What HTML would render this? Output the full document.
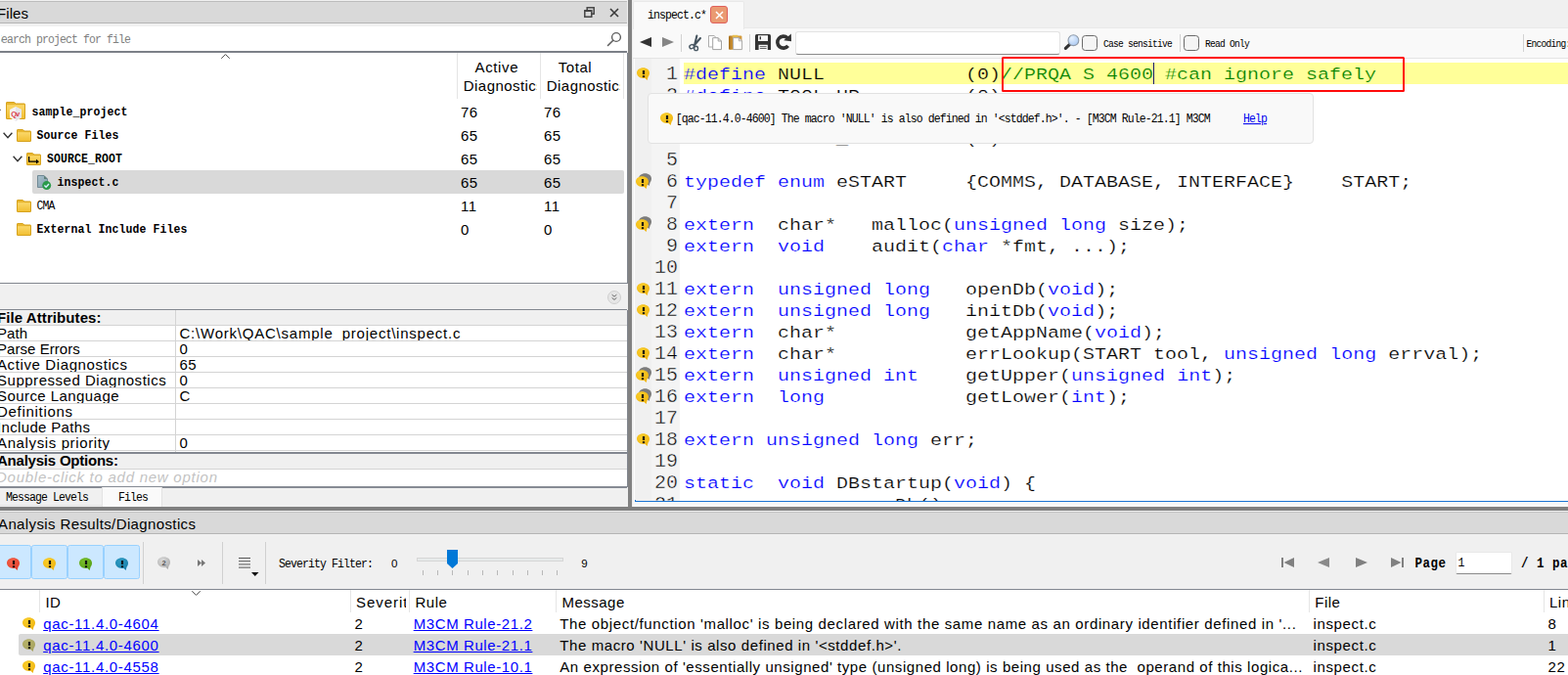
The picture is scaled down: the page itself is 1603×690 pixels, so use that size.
<!DOCTYPE html>
<html lang="en"><head><meta charset="utf-8"><title>inspect.c - Analysis</title>
<style>

html,body{margin:0;padding:0;background:#fff;}
#app{position:relative;width:1603px;height:690px;overflow:hidden;background:#f0f0f0;font-family:"Liberation Sans",sans-serif;}
.r{position:absolute;}
.t{position:absolute;white-space:pre;}
.c{position:absolute;overflow:hidden;}
svg{position:absolute;overflow:visible;}
.cl{font:20px/22px "Liberation Mono",monospace;color:#000;transform:scaleY(0.87);transform-origin:0 16px;-webkit-text-stroke:0.25px #fff;}.cl.g{-webkit-text-stroke:0.45px #f4f4f4;transform:scaleY(0.97)}.cl.y{-webkit-text-stroke-color:#ffff99}

</style></head>
<body>
<div id="app">
<div class="c" id="files" style="left:0;top:0;width:642px;height:518px;background:#f0f0f0">
<div class="r" style="left:0px;top:0px;width:641px;height:1px;background:#f0f0f0;"></div>
<div class="r" style="left:0px;top:1px;width:641px;height:22px;background:#d9d9d9;border-top:1px solid #bdbdbd;border-bottom:1px solid #b4b4b4;box-sizing:content-box;height:21px"></div>
<span class="t" style="left:-3.00px;top:4px;font:normal normal 15px/19px 'Liberation Sans',sans-serif;color:#000;letter-spacing:0.082px;">Files</span>
<svg style="left:597px;top:7px" width="11" height="11" viewBox="0 0 11 11"><rect x="3.2" y="0.8" width="7" height="6.4" fill="none" stroke="#444" stroke-width="1.5"/><rect x="0.8" y="3.8" width="7" height="6.4" fill="#d9d9d9" stroke="#444" stroke-width="1.5"/><rect x="0.8" y="3.6" width="7" height="1.4" fill="#444"/></svg>
<svg style="left:623.3px;top:7.8px" width="10" height="10" viewBox="0 0 10 10"><path d="M1 1 L9 9 M9 1 L1 9" stroke="#3a3a3a" stroke-width="1.6" fill="none"/></svg>
<div class="r" style="left:0px;top:27px;width:642px;height:25px;background:#fff;"></div>
<div class="r" style="left:0px;top:52px;width:641px;height:2px;background:#7c8088;"></div>
<span class="t" style="left:-4.90px;top:34px;font:normal normal 11.5px/14px 'Liberation Mono',monospace;color:#808080;letter-spacing:-0.901px;transform:scaleY(1.08);transform-origin:0 10px;">Search project for file</span>
<svg style="left:620px;top:31.5px" width="16" height="16" viewBox="0 0 16 16"><circle cx="10" cy="6" r="4.4" fill="none" stroke="#5f5f5f" stroke-width="1.4"/><path d="M6.8 9.2 L1.5 14.5" stroke="#5f5f5f" stroke-width="1.6" stroke-linecap="round"/></svg>
<div class="r" style="left:0px;top:30px;width:1.2px;height:20px;background:#fff;"></div>
<div class="r" style="left:0px;top:54px;width:641px;height:235px;background:#fff;"></div>
<div class="r" style="left:0px;top:289px;width:641px;height:1px;background:#828790;"></div>
<div class="r" style="left:467px;top:54px;width:1px;height:47px;background:#e5e5e5;"></div>
<div class="r" style="left:552px;top:54px;width:1px;height:47px;background:#e5e5e5;"></div>
<div class="r" style="left:637px;top:54px;width:1px;height:47px;background:#e5e5e5;"></div>
<svg style="left:226px;top:55px" width="9" height="5" viewBox="0 0 9 5"><path d="M0.3 4.8 L4.5 0.6 L8.7 4.8" stroke="#4a4a4a" stroke-width="1" fill="none"/></svg>
<span class="t" style="left:485.50px;top:59px;font:normal normal 15px/19px 'Liberation Sans',sans-serif;color:#000;letter-spacing:0.628px;">Active</span>
<div class="c" style="left:468px;top:78px;width:81px;height:22px"><span class="t" style="left:5.80px;top:0px;font:normal normal 15px/19px 'Liberation Sans',sans-serif;color:#000;letter-spacing:0.445px;">Diagnostics</span></div>
<span class="t" style="left:570.80px;top:59px;font:normal normal 15px/19px 'Liberation Sans',sans-serif;color:#000;letter-spacing:0.528px;">Total</span>
<div class="c" style="left:553px;top:78px;width:81px;height:22px"><span class="t" style="left:5.80px;top:0px;font:normal normal 15px/19px 'Liberation Sans',sans-serif;color:#000;letter-spacing:0.445px;">Diagnostics</span></div>
<div class="r" style="left:33px;top:174px;width:605px;height:24px;background:#d9d9d9;border-radius:2px"></div>
<svg style="left:-9px;top:111px" width="10" height="7" viewBox="0 0 10 7"><path d="M0.6 0.8 L5 5.6 L9.4 0.8" stroke="#333" stroke-width="1.4" fill="none"/></svg>
<svg style="left:6px;top:104px" width="20" height="20" viewBox="0 0 20 20"><defs><linearGradient id="g1" x1="0" y1="0" x2="0" y2="1"><stop offset="0" stop-color="#fbd86a"/><stop offset="1" stop-color="#f1bf33"/></linearGradient></defs><path d="M0.5 1 Q0.5 0.5 1 0.5 L8.40 0.5 L10.40 2 L19 2 Q19.5 2 19.5 2.5 L19.5 17 Q19.5 17.5 19 17.5 L1 17.5 Q0.5 17.5 0.5 17 Z" fill="#e9b730" stroke="#d6a21d" stroke-width="1"/><rect x="1" y="3.2" width="18" height="13.8" fill="url(#g1)"/><path d="M10 5 L16 8 L16 16 L10 20 L4 16 L4 8 Z" fill="#f4f4f6"/><path d="M10 5 L16 8 L16 16 L10 20 Z" fill="#e6e6ea"/><text x="5.2" y="15" font-family="Liberation Sans, sans-serif" font-size="7.5" font-weight="bold" fill="#d8404c" letter-spacing="-0.9">Qv</text></svg>
<span class="t" style="left:32.50px;top:108px;font:normal bold 11.5px/14px 'Liberation Mono',monospace;color:#000;letter-spacing:0.099px;transform:scaleY(1.08);transform-origin:0 10px;">sample_project</span>
<span class="t" style="left:471.00px;top:105px;font:normal normal 15px/19px 'Liberation Sans',sans-serif;color:#000;letter-spacing:0.500px;">76</span>
<span class="t" style="left:556.00px;top:105px;font:normal normal 15px/19px 'Liberation Sans',sans-serif;color:#000;letter-spacing:0.500px;">76</span>
<svg style="left:3px;top:135px" width="10" height="7" viewBox="0 0 10 7"><path d="M0.6 0.8 L5 5.6 L9.4 0.8" stroke="#333" stroke-width="1.4" fill="none"/></svg>
<svg style="left:17px;top:132px" width="15" height="13" viewBox="0 0 15 13"><defs><linearGradient id="g2" x1="0" y1="0" x2="0" y2="1"><stop offset="0" stop-color="#fbd86a"/><stop offset="1" stop-color="#f1bf33"/></linearGradient></defs><path d="M0.5 1 Q0.5 0.5 1 0.5 L6.30 0.5 L7.80 2 L14 2 Q14.5 2 14.5 2.5 L14.5 12 Q14.5 12.5 14 12.5 L1 12.5 Q0.5 12.5 0.5 12 Z" fill="#e9b730" stroke="#d6a21d" stroke-width="1"/><rect x="1" y="3.2" width="13" height="8.8" fill="url(#g2)"/></svg>
<span class="t" style="left:37.50px;top:132px;font:normal bold 11.5px/14px 'Liberation Mono',monospace;color:#000;letter-spacing:0.099px;transform:scaleY(1.08);transform-origin:0 10px;">Source Files</span>
<span class="t" style="left:471.00px;top:129px;font:normal normal 15px/19px 'Liberation Sans',sans-serif;color:#000;letter-spacing:0.500px;">65</span>
<span class="t" style="left:556.00px;top:129px;font:normal normal 15px/19px 'Liberation Sans',sans-serif;color:#000;letter-spacing:0.500px;">65</span>
<svg style="left:13px;top:159px" width="10" height="7" viewBox="0 0 10 7"><path d="M0.6 0.8 L5 5.6 L9.4 0.8" stroke="#333" stroke-width="1.4" fill="none"/></svg>
<svg style="left:27px;top:156px" width="15" height="13" viewBox="0 0 15 13"><defs><linearGradient id="g3" x1="0" y1="0" x2="0" y2="1"><stop offset="0" stop-color="#fbd86a"/><stop offset="1" stop-color="#f1bf33"/></linearGradient></defs><path d="M0.5 1 Q0.5 0.5 1 0.5 L6.30 0.5 L7.80 2 L14 2 Q14.5 2 14.5 2.5 L14.5 12 Q14.5 12.5 14 12.5 L1 12.5 Q0.5 12.5 0.5 12 Z" fill="#e9b730" stroke="#d6a21d" stroke-width="1"/><rect x="1" y="3.2" width="13" height="8.8" fill="url(#g3)"/><path d="M2.6 4 L2.6 9.2 L11 9.2" stroke="#000" stroke-width="1.3" fill="none"/><path d="M10 6.8 L13 9.2 L10 11.6 Z" fill="#000"/></svg>
<span class="t" style="left:48.00px;top:156px;font:normal bold 11.5px/14px 'Liberation Mono',monospace;color:#000;letter-spacing:0.099px;transform:scaleY(1.08);transform-origin:0 10px;">SOURCE_ROOT</span>
<span class="t" style="left:471.00px;top:153px;font:normal normal 15px/19px 'Liberation Sans',sans-serif;color:#000;letter-spacing:0.500px;">65</span>
<span class="t" style="left:556.00px;top:153px;font:normal normal 15px/19px 'Liberation Sans',sans-serif;color:#000;letter-spacing:0.500px;">65</span>
<svg style="left:38px;top:179px" width="15" height="16" viewBox="0 0 15 16"><defs><linearGradient id="g4" x1="0" y1="0" x2="1" y2="1"><stop offset="0" stop-color="#a9c0cc"/><stop offset="1" stop-color="#7f9dab"/></linearGradient></defs><path d="M0.5 0.5 L7 0.5 L10.5 4 L10.5 12.5 L0.5 12.5 Z" fill="url(#g4)" stroke="#6f8894" stroke-width="1"/><path d="M7 0.5 L7 4 L10.5 4 Z" fill="#5f7f78"/><circle cx="9.7" cy="10.6" r="4.5" fill="#2a9a4a"/><path d="M7.4 10.6 L9.1 12.3 L12 9" stroke="#d8f0ff" stroke-width="1.4" fill="none"/></svg>
<span class="t" style="left:58.50px;top:180px;font:normal bold 11.5px/14px 'Liberation Mono',monospace;color:#000;letter-spacing:0.099px;transform:scaleY(1.08);transform-origin:0 10px;">inspect.c</span>
<span class="t" style="left:471.00px;top:177px;font:normal normal 15px/19px 'Liberation Sans',sans-serif;color:#000;letter-spacing:0.500px;">65</span>
<span class="t" style="left:556.00px;top:177px;font:normal normal 15px/19px 'Liberation Sans',sans-serif;color:#000;letter-spacing:0.500px;">65</span>
<svg style="left:17px;top:204px" width="15" height="13" viewBox="0 0 15 13"><defs><linearGradient id="g5" x1="0" y1="0" x2="0" y2="1"><stop offset="0" stop-color="#fbd86a"/><stop offset="1" stop-color="#f1bf33"/></linearGradient></defs><path d="M0.5 1 Q0.5 0.5 1 0.5 L6.30 0.5 L7.80 2 L14 2 Q14.5 2 14.5 2.5 L14.5 12 Q14.5 12.5 14 12.5 L1 12.5 Q0.5 12.5 0.5 12 Z" fill="#e9b730" stroke="#d6a21d" stroke-width="1"/><rect x="1" y="3.2" width="13" height="8.8" fill="url(#g5)"/></svg>
<span class="t" style="left:37.50px;top:204px;font:normal normal 11.5px/14px 'Liberation Mono',monospace;color:#000;letter-spacing:-0.901px;transform:scaleY(1.08);transform-origin:0 10px;">CMA</span>
<span class="t" style="left:471.00px;top:201px;font:normal normal 15px/19px 'Liberation Sans',sans-serif;color:#000;letter-spacing:0.500px;">11</span>
<span class="t" style="left:556.00px;top:201px;font:normal normal 15px/19px 'Liberation Sans',sans-serif;color:#000;letter-spacing:0.500px;">11</span>
<svg style="left:17px;top:228px" width="15" height="13" viewBox="0 0 15 13"><defs><linearGradient id="g6" x1="0" y1="0" x2="0" y2="1"><stop offset="0" stop-color="#fbd86a"/><stop offset="1" stop-color="#f1bf33"/></linearGradient></defs><path d="M0.5 1 Q0.5 0.5 1 0.5 L6.30 0.5 L7.80 2 L14 2 Q14.5 2 14.5 2.5 L14.5 12 Q14.5 12.5 14 12.5 L1 12.5 Q0.5 12.5 0.5 12 Z" fill="#e9b730" stroke="#d6a21d" stroke-width="1"/><rect x="1" y="3.2" width="13" height="8.8" fill="url(#g6)"/></svg>
<span class="t" style="left:37.50px;top:228px;font:normal bold 11.5px/14px 'Liberation Mono',monospace;color:#000;letter-spacing:0.099px;transform:scaleY(1.08);transform-origin:0 10px;">External Include Files</span>
<span class="t" style="left:471.00px;top:225px;font:normal normal 15px/19px 'Liberation Sans',sans-serif;color:#000;letter-spacing:0.500px;">0</span>
<span class="t" style="left:556.00px;top:225px;font:normal normal 15px/19px 'Liberation Sans',sans-serif;color:#000;letter-spacing:0.500px;">0</span>
<svg style="left:621px;top:297px" width="14" height="14" viewBox="0 0 14 14"><circle cx="7" cy="7" r="6.5" fill="#e6e6e6" stroke="#cfcfcf" stroke-width="1"/><path d="M4.6 4.2 L7 6.2 L9.4 4.2 M4.6 7.4 L7 9.4 L9.4 7.4" stroke="#666" stroke-width="1" fill="none"/></svg>
<div class="r" style="left:0px;top:316px;width:641px;height:1px;background:#828790;"></div>
<div class="r" style="left:0px;top:317px;width:641px;height:146px;background:#fff;"></div>
<div class="r" style="left:0px;top:317px;width:641px;height:15px;background:#f0f0f0;"></div>
<div class="r" style="left:0px;top:332px;width:641px;height:1px;background:#d4d4d4;"></div>
<div class="r" style="left:0px;top:348px;width:641px;height:1px;background:#d4d4d4;"></div>
<div class="r" style="left:0px;top:364px;width:641px;height:1px;background:#d4d4d4;"></div>
<div class="r" style="left:0px;top:380px;width:641px;height:1px;background:#d4d4d4;"></div>
<div class="r" style="left:0px;top:396px;width:641px;height:1px;background:#d4d4d4;"></div>
<div class="r" style="left:0px;top:412px;width:641px;height:1px;background:#d4d4d4;"></div>
<div class="r" style="left:0px;top:428px;width:641px;height:1px;background:#d4d4d4;"></div>
<div class="r" style="left:0px;top:444px;width:641px;height:1px;background:#d4d4d4;"></div>
<div class="r" style="left:0px;top:460px;width:641px;height:1px;background:#d4d4d4;"></div>
<div class="r" style="left:179px;top:317px;width:1px;height:146px;background:#d4d4d4;"></div>
<div class="r" style="left:0px;top:462px;width:641px;height:2px;background:#828790;"></div>
<div class="c" style="left:0;top:317px;width:641px;height:15px"><span class="t" style="left:-3.00px;top:-2px;font:normal bold 15px/19px 'Liberation Sans',sans-serif;color:#000;letter-spacing:0.081px;">File Attributes:</span></div>
<div class="c" style="left:0;top:333px;width:180px;height:15px"><span class="t" style="left:-3.00px;top:-2px;font:normal normal 15px/19px 'Liberation Sans',sans-serif;color:#000;letter-spacing:0.047px;">Path</span></div>
<div class="c" style="left:181px;top:333px;width:460px;height:15px"><span class="t" style="left:2.50px;top:-2px;font:normal normal 15px/19px 'Liberation Sans',sans-serif;color:#000;letter-spacing:0.777px;">C:\Work\QAC\sample_project\inspect.c</span></div>
<div class="c" style="left:0;top:349px;width:180px;height:15px"><span class="t" style="left:-3.00px;top:-2px;font:normal normal 15px/19px 'Liberation Sans',sans-serif;color:#000;letter-spacing:0.047px;">Parse Errors</span></div>
<div class="c" style="left:181px;top:349px;width:460px;height:15px"><span class="t" style="left:2.50px;top:-2px;font:normal normal 15px/19px 'Liberation Sans',sans-serif;color:#000;letter-spacing:0.500px;">0</span></div>
<div class="c" style="left:0;top:365px;width:180px;height:15px"><span class="t" style="left:-3.00px;top:-2px;font:normal normal 15px/19px 'Liberation Sans',sans-serif;color:#000;letter-spacing:0.614px;">Active Diagnostics</span></div>
<div class="c" style="left:181px;top:365px;width:460px;height:15px"><span class="t" style="left:2.50px;top:-2px;font:normal normal 15px/19px 'Liberation Sans',sans-serif;color:#000;letter-spacing:0.500px;">65</span></div>
<div class="c" style="left:0;top:381px;width:180px;height:15px"><span class="t" style="left:-3.00px;top:-2px;font:normal normal 15px/19px 'Liberation Sans',sans-serif;color:#000;letter-spacing:0.521px;">Suppressed Diagnostics</span></div>
<div class="c" style="left:181px;top:381px;width:460px;height:15px"><span class="t" style="left:2.50px;top:-2px;font:normal normal 15px/19px 'Liberation Sans',sans-serif;color:#000;letter-spacing:0.500px;">0</span></div>
<div class="c" style="left:0;top:397px;width:180px;height:15px"><span class="t" style="left:-3.00px;top:-2px;font:normal normal 15px/19px 'Liberation Sans',sans-serif;color:#000;letter-spacing:0.433px;">Source Language</span></div>
<div class="c" style="left:181px;top:397px;width:460px;height:15px"><span class="t" style="left:2.50px;top:-2px;font:normal normal 15px/19px 'Liberation Sans',sans-serif;color:#000;letter-spacing:0.500px;">C</span></div>
<div class="c" style="left:0;top:413px;width:180px;height:15px"><span class="t" style="left:-3.00px;top:-2px;font:normal normal 15px/19px 'Liberation Sans',sans-serif;color:#000;letter-spacing:0.695px;">Definitions</span></div>
<div class="c" style="left:0;top:429px;width:180px;height:15px"><span class="t" style="left:-3.00px;top:-2px;font:normal normal 15px/19px 'Liberation Sans',sans-serif;color:#000;letter-spacing:0.341px;">Include Paths</span></div>
<div class="c" style="left:0;top:445px;width:180px;height:15px"><span class="t" style="left:-3.00px;top:-2px;font:normal normal 15px/19px 'Liberation Sans',sans-serif;color:#000;letter-spacing:0.623px;">Analysis priority</span></div>
<div class="c" style="left:181px;top:445px;width:460px;height:15px"><span class="t" style="left:2.50px;top:-2px;font:normal normal 15px/19px 'Liberation Sans',sans-serif;color:#000;letter-spacing:0.500px;">0</span></div>
<div class="r" style="left:0px;top:464px;width:641px;height:15px;background:#f0f0f0;"></div>
<div class="r" style="left:0px;top:479px;width:641px;height:1px;background:#d4d4d4;"></div>
<div class="r" style="left:0px;top:480px;width:641px;height:17px;background:#fff;"></div>
<div class="r" style="left:0px;top:497px;width:641px;height:2px;background:#868b94;"></div>
<div class="c" style="left:0;top:464px;width:641px;height:15px"><span class="t" style="left:-3.00px;top:-3px;font:normal bold 15px/19px 'Liberation Sans',sans-serif;color:#000;letter-spacing:-0.221px;">Analysis Options:</span></div>
<div class="c" style="left:0;top:480px;width:641px;height:17px"><span class="t" style="left:-4.00px;top:-2px;font:italic normal 15px/19px 'Liberation Sans',sans-serif;color:#c3c3c3;letter-spacing:0.748px;">Double-click to add new option</span></div>
<div class="r" style="left:641px;top:54px;width:1px;height:236px;background:#828790;"></div>
<div class="r" style="left:641px;top:317px;width:1px;height:181px;background:#828790;"></div>
<div class="r" style="left:0px;top:499px;width:641px;height:19px;background:#f0f0f0;"></div>
<div class="r" style="left:104px;top:498px;width:62px;height:20px;background:#fafafa;border-left:1px solid #e3e3e3;border-right:1px solid #e3e3e3;box-sizing:border-box"></div>
<div class="r" style="left:0px;top:516px;width:104px;height:1px;background:#e3e3e3;"></div>
<span class="t" style="left:6.00px;top:502px;font:normal normal 11.5px/14px 'Liberation Mono',monospace;color:#000;letter-spacing:-0.901px;transform:scaleY(1.08);transform-origin:0 10px;">Message Levels</span>
<span class="t" style="left:121.00px;top:502px;font:normal normal 11.5px/14px 'Liberation Mono',monospace;color:#000;letter-spacing:-0.901px;transform:scaleY(1.08);transform-origin:0 10px;">Files</span>
</div>
<div class="r" style="left:642px;top:0px;width:4px;height:518px;background:#828282;"></div>
<div class="r" style="left:646px;top:0px;width:1px;height:518px;background:#ededed;"></div>
<div class="r" style="left:0px;top:518px;width:1603px;height:4px;background:#808080;"></div>
<div class="r" style="left:647px;top:0px;width:956px;height:28px;background:#f0f0f0;"></div>
<div class="r" style="left:647px;top:28px;width:956px;height:31px;background:#f9f9f9;border-top:1px solid #e9e9e9;box-sizing:border-box"></div>
<div class="r" style="left:647px;top:59px;width:956px;height:1px;background:#e4e4e4;"></div>
<div class="r" style="left:647px;top:1px;width:114px;height:29px;background:#f9f9f9;border:1px solid #e9e9e9;border-bottom:none;box-sizing:border-box;border-radius:2px 2px 0 0"></div>
<span class="t" style="left:662.00px;top:9px;font:normal normal 11.5px/14px 'Liberation Mono',monospace;color:#000;letter-spacing:-0.901px;transform:scaleY(1.08);transform-origin:0 10px;">inspect.c*</span>
<div class="r" style="left:726px;top:6px;width:18px;height:18px;box-sizing:border-box;border:1.5px solid #e0605c;border-radius:3px;background:#ea9a72"></div>
<svg style="left:730.5px;top:10.5px" width="9" height="9" viewBox="0 0 9 9"><path d="M1 1 L8 8 M8 1 L1 8" stroke="#fff" stroke-width="1.5" fill="none"/></svg>
<svg style="left:654.4px;top:38px" width="12" height="10" viewBox="0 0 12 10"><path d="M12 0 L12 10 L0 5.0 Z" fill="#333"/></svg>
<svg style="left:677px;top:38px" width="12" height="10" viewBox="0 0 12 10"><path d="M0 0 L0 10 L12 5.0 Z" fill="#858585"/></svg>
<div class="r" style="left:696px;top:35px;width:1px;height:18px;background:#d2d2d2;"></div>
<svg style="left:703.5px;top:35.5px" width="13" height="16" viewBox="0 0 13 16"><path d="M8.4 0.5 L6.2 9.5 M12 3 L5.5 10.5" stroke="#44525d" stroke-width="2" fill="none" stroke-linecap="round"/><ellipse cx="3.2" cy="11.6" rx="2.4" ry="1.9" fill="none" stroke="#4b5a66" stroke-width="1.4" transform="rotate(-25 3.2 11.6)"/><ellipse cx="7.6" cy="13.4" rx="1.9" ry="2.2" fill="none" stroke="#4b5a66" stroke-width="1.4"/></svg>
<svg style="left:724px;top:36px" width="14" height="15" viewBox="0 0 14 15"><path d="M0.5 0.5 L6 0.5 L8.6 3 L8.6 12 L0.5 12 Z" fill="#fdfdfd" stroke="#adadad"/><g transform="translate(4.2,2.2)"><path d="M0.5 0.5 L6 0.5 L9.3 3.8 L9.3 12.4 L0.5 12.4 Z" fill="#fff" stroke="#a2a2a2"/><path d="M6 0.5 L6 3.8 L9.3 3.8" fill="none" stroke="#a2a2a2"/></g></svg>
<svg style="left:745px;top:35.8px" width="14" height="15" viewBox="0 0 14 15"><defs><linearGradient id="g7" x1="0" y1="0" x2="1" y2="0"><stop offset="0" stop-color="#a56c18"/><stop offset="0.35" stop-color="#d9a040"/><stop offset="1" stop-color="#d39a3a"/></linearGradient></defs><rect x="0" y="0.6" width="13.4" height="14.2" rx="1" fill="url(#g7)"/><rect x="3.8" y="-0.2" width="5.6" height="2" fill="#e8c050"/><path d="M4.5 2.7 L10.4 2.7 L13.6 5.8 L13.6 14.6 L4.5 14.6 Z" fill="#fff" stroke="#ababab"/><path d="M10.4 2.7 L10.4 5.8 L13.6 5.8" fill="none" stroke="#ababab"/></svg>
<div class="r" style="left:766px;top:35px;width:1px;height:18px;background:#d2d2d2;"></div>
<svg style="left:772px;top:35.2px" width="16" height="16" viewBox="0 0 16 16"><path d="M0 1.5 Q0 0 1.5 0 L14.5 0 Q16 0 16 1.5 L16 16 L0 16 Z" fill="#333"/><rect x="3" y="1.2" width="10" height="5.8" fill="#f6f6f6"/><rect x="4.6" y="2.4" width="1.4" height="3" fill="#333"/><rect x="3.6" y="10.8" width="9.2" height="5.2" fill="#f6f6f6"/><rect x="4.8" y="12.2" width="6.8" height="0.9" fill="#555"/><rect x="4.8" y="14" width="6.8" height="0.9" fill="#555"/></svg>
<svg style="left:793px;top:35.2px" width="16" height="16" viewBox="0 0 16 16"><path d="M12.6 11.8 A6 6 0 1 1 12 3.8" fill="none" stroke="#333" stroke-width="3.6"/><path d="M8.2 6.2 L16 7.2 L15.8 -0.4 Z" fill="#333"/></svg>
<div class="r" style="left:813px;top:32px;width:271px;height:23.5px;box-sizing:border-box;background:#fff;border:1px solid #e3e3e3;border-bottom:1px solid #8a8a8a;border-radius:3px"></div>
<svg style="left:1087.5px;top:34.8px" width="16" height="16" viewBox="0 0 16 16"><defs><radialGradient id="g8" cx="0.35" cy="0.3" r="0.8"><stop offset="0" stop-color="#e6f1ff"/><stop offset="1" stop-color="#a9c8f2"/></radialGradient></defs><path d="M5.8 10.2 L1.4 14.4" stroke="#333" stroke-width="3.2" stroke-linecap="round"/><circle cx="9.4" cy="6.2" r="5.4" fill="url(#g8)" stroke="#8e9aa8" stroke-width="1.1"/></svg>
<div class="r" style="left:1106px;top:36px;width:16px;height:16px;box-sizing:border-box;border:1px solid #6a6a6a;border-radius:3.5px;background:#f5f5f5"></div>
<span class="t" style="left:1128.00px;top:40px;font:normal normal 9.6px/12px 'Liberation Mono',monospace;color:#000;letter-spacing:-0.761px;transform:scaleY(1.08);transform-origin:0 8px;">Case sensitive</span>
<div class="r" style="left:1206px;top:35px;width:1px;height:18px;background:#d2d2d2;"></div>
<div class="r" style="left:1210px;top:36px;width:16px;height:16px;box-sizing:border-box;border:1px solid #6a6a6a;border-radius:3.5px;background:#f5f5f5"></div>
<span class="t" style="left:1232.00px;top:40px;font:normal normal 9.6px/12px 'Liberation Mono',monospace;color:#000;letter-spacing:-0.761px;transform:scaleY(1.08);transform-origin:0 8px;">Read Only</span>
<div class="r" style="left:1557px;top:35px;width:1px;height:18px;background:#d2d2d2;"></div>
<span class="t" style="left:1560.50px;top:40px;font:normal normal 9.6px/12px 'Liberation Mono',monospace;color:#000;letter-spacing:-0.761px;transform:scaleY(1.08);transform-origin:0 8px;">Encoding: UTF-8</span>
<div class="c" id="code" style="left:647px;top:60px;width:956px;height:452px;background:#fff">
<div class="r" style="left:0px;top:0px;width:1px;height:452px;background:#f2f2f2;"></div>
<div class="r" style="left:1px;top:0px;width:1px;height:452px;background:#fdfdfd;"></div>
<div class="r" style="left:2px;top:0px;width:17px;height:452px;background:#f0f0f0;"></div>
<div class="r" style="left:19px;top:0px;width:29px;height:452px;background:#f4f4f4;"></div>
<div class="r" style="left:52px;top:4px;width:904px;height:22px;background:#ffff99;"></div>
<div class="t cl g" style="left:19px;top:5px;width:27px;text-align:right">1</div>
<div class="t cl y" style="left:52.0px;top:5px"><span style="color:#0000ff">#define</span> NULL            (0)<span style="color:#008000">//PRQA S 4600 #can ignore safely</span></div>
<svg style="left:4px;top:9px" width="13" height="13" viewBox="0 0 13 13"><defs><radialGradient id="g9" cx="0.4" cy="0.3" r="0.8"><stop offset="0" stop-color="#fbd02c"/><stop offset="1" stop-color="#eeb10c"/></radialGradient></defs><path d="M6.5 0.3 C10.2 0.3 13 2.6 13 5.6 C13 7.3 12.4 8.6 11.6 9.6 L10.6 13 L8.3 10.8 C7.7 10.9 7.1 11 6.5 11 C2.8 11 0 8.6 0 5.6 C0 2.6 2.8 0.3 6.5 0.3 Z" fill="url(#g9)"/><rect x="5.9" y="3" width="2.2" height="4" fill="#111"/><rect x="5.9" y="8.2" width="2.2" height="1.9" fill="#111"/></svg>
<div class="t cl g" style="left:19px;top:27px;width:27px;text-align:right">2</div>
<div class="t cl" style="left:52.0px;top:27px"><span style="color:#0000ff">#define</span> TOOL_UP         (0)</div>
<div class="t cl g" style="left:19px;top:49px;width:27px;text-align:right">3</div>
<div class="t cl" style="left:52.0px;top:49px"><span style="color:#0000ff">#define</span> TOOL_DOWN       (1)</div>
<div class="t cl g" style="left:19px;top:71px;width:27px;text-align:right">4</div>
<div class="t cl" style="left:52.0px;top:71px"><span style="color:#0000ff">#define</span> TOOLS_MAX       (2)</div>
<div class="t cl g" style="left:19px;top:93px;width:27px;text-align:right">5</div>
<div class="t cl g" style="left:19px;top:115px;width:27px;text-align:right">6</div>
<div class="t cl" style="left:52.0px;top:115px"><span style="color:#0000ff">typedef</span> <span style="color:#0000ff">enum</span> eSTART     {COMMS, DATABASE, INTERFACE}    START;</div>
<svg style="left:3.2px;top:120px" width="13" height="13" viewBox="0 0 13 13"><path transform="translate(3,-3)" d="M6.5 0.3 C10.2 0.3 13 2.6 13 5.6 C13 7.3 12.4 8.6 11.6 9.6 L10.6 13 L8.3 10.8 C7.7 10.9 7.1 11 6.5 11 C2.8 11 0 8.6 0 5.6 C0 2.6 2.8 0.3 6.5 0.3 Z" fill="#7c7c7c"/><defs><radialGradient id="g10" cx="0.4" cy="0.3" r="0.8"><stop offset="0" stop-color="#fbd02c"/><stop offset="1" stop-color="#eeb10c"/></radialGradient></defs><path d="M6.5 0.3 C10.2 0.3 13 2.6 13 5.6 C13 7.3 12.4 8.6 11.6 9.6 L10.6 13 L8.3 10.8 C7.7 10.9 7.1 11 6.5 11 C2.8 11 0 8.6 0 5.6 C0 2.6 2.8 0.3 6.5 0.3 Z" fill="url(#g10)"/><rect x="5.9" y="3" width="2.2" height="4" fill="#111"/><rect x="5.9" y="8.2" width="2.2" height="1.9" fill="#111"/></svg>
<div class="t cl g" style="left:19px;top:137px;width:27px;text-align:right">7</div>
<div class="t cl g" style="left:19px;top:159px;width:27px;text-align:right">8</div>
<div class="t cl" style="left:52.0px;top:159px"><span style="color:#0000ff">extern</span>  char*   malloc(<span style="color:#0000ff">unsigned</span> <span style="color:#0000ff">long</span> size);</div>
<svg style="left:3.2px;top:164px" width="13" height="13" viewBox="0 0 13 13"><path transform="translate(3,-3)" d="M6.5 0.3 C10.2 0.3 13 2.6 13 5.6 C13 7.3 12.4 8.6 11.6 9.6 L10.6 13 L8.3 10.8 C7.7 10.9 7.1 11 6.5 11 C2.8 11 0 8.6 0 5.6 C0 2.6 2.8 0.3 6.5 0.3 Z" fill="#7c7c7c"/><defs><radialGradient id="g11" cx="0.4" cy="0.3" r="0.8"><stop offset="0" stop-color="#fbd02c"/><stop offset="1" stop-color="#eeb10c"/></radialGradient></defs><path d="M6.5 0.3 C10.2 0.3 13 2.6 13 5.6 C13 7.3 12.4 8.6 11.6 9.6 L10.6 13 L8.3 10.8 C7.7 10.9 7.1 11 6.5 11 C2.8 11 0 8.6 0 5.6 C0 2.6 2.8 0.3 6.5 0.3 Z" fill="url(#g11)"/><rect x="5.9" y="3" width="2.2" height="4" fill="#111"/><rect x="5.9" y="8.2" width="2.2" height="1.9" fill="#111"/></svg>
<div class="t cl g" style="left:19px;top:181px;width:27px;text-align:right">9</div>
<div class="t cl" style="left:52.0px;top:181px"><span style="color:#0000ff">extern</span>  <span style="color:#0000ff">void</span>    audit(<span style="color:#0000ff">char</span> *fmt, ...);</div>
<div class="t cl g" style="left:19px;top:203px;width:27px;text-align:right">10</div>
<div class="t cl g" style="left:19px;top:225px;width:27px;text-align:right">11</div>
<div class="t cl" style="left:52.0px;top:225px"><span style="color:#0000ff">extern</span>  <span style="color:#0000ff">unsigned</span> <span style="color:#0000ff">long</span>   openDb(<span style="color:#0000ff">void</span>);</div>
<svg style="left:4px;top:229px" width="13" height="13" viewBox="0 0 13 13"><defs><radialGradient id="g12" cx="0.4" cy="0.3" r="0.8"><stop offset="0" stop-color="#fbd02c"/><stop offset="1" stop-color="#eeb10c"/></radialGradient></defs><path d="M6.5 0.3 C10.2 0.3 13 2.6 13 5.6 C13 7.3 12.4 8.6 11.6 9.6 L10.6 13 L8.3 10.8 C7.7 10.9 7.1 11 6.5 11 C2.8 11 0 8.6 0 5.6 C0 2.6 2.8 0.3 6.5 0.3 Z" fill="url(#g12)"/><rect x="5.9" y="3" width="2.2" height="4" fill="#111"/><rect x="5.9" y="8.2" width="2.2" height="1.9" fill="#111"/></svg>
<div class="t cl g" style="left:19px;top:247px;width:27px;text-align:right">12</div>
<div class="t cl" style="left:52.0px;top:247px"><span style="color:#0000ff">extern</span>  <span style="color:#0000ff">unsigned</span> <span style="color:#0000ff">long</span>   initDb(<span style="color:#0000ff">void</span>);</div>
<svg style="left:4px;top:251px" width="13" height="13" viewBox="0 0 13 13"><defs><radialGradient id="g13" cx="0.4" cy="0.3" r="0.8"><stop offset="0" stop-color="#fbd02c"/><stop offset="1" stop-color="#eeb10c"/></radialGradient></defs><path d="M6.5 0.3 C10.2 0.3 13 2.6 13 5.6 C13 7.3 12.4 8.6 11.6 9.6 L10.6 13 L8.3 10.8 C7.7 10.9 7.1 11 6.5 11 C2.8 11 0 8.6 0 5.6 C0 2.6 2.8 0.3 6.5 0.3 Z" fill="url(#g13)"/><rect x="5.9" y="3" width="2.2" height="4" fill="#111"/><rect x="5.9" y="8.2" width="2.2" height="1.9" fill="#111"/></svg>
<div class="t cl g" style="left:19px;top:269px;width:27px;text-align:right">13</div>
<div class="t cl" style="left:52.0px;top:269px"><span style="color:#0000ff">extern</span>  char*           getAppName(<span style="color:#0000ff">void</span>);</div>
<div class="t cl g" style="left:19px;top:291px;width:27px;text-align:right">14</div>
<div class="t cl" style="left:52.0px;top:291px"><span style="color:#0000ff">extern</span>  char*           errLookup(START tool, <span style="color:#0000ff">unsigned</span> <span style="color:#0000ff">long</span> errval);</div>
<svg style="left:4px;top:295px" width="13" height="13" viewBox="0 0 13 13"><defs><radialGradient id="g14" cx="0.4" cy="0.3" r="0.8"><stop offset="0" stop-color="#fbd02c"/><stop offset="1" stop-color="#eeb10c"/></radialGradient></defs><path d="M6.5 0.3 C10.2 0.3 13 2.6 13 5.6 C13 7.3 12.4 8.6 11.6 9.6 L10.6 13 L8.3 10.8 C7.7 10.9 7.1 11 6.5 11 C2.8 11 0 8.6 0 5.6 C0 2.6 2.8 0.3 6.5 0.3 Z" fill="url(#g14)"/><rect x="5.9" y="3" width="2.2" height="4" fill="#111"/><rect x="5.9" y="8.2" width="2.2" height="1.9" fill="#111"/></svg>
<div class="t cl g" style="left:19px;top:313px;width:27px;text-align:right">15</div>
<div class="t cl" style="left:52.0px;top:313px"><span style="color:#0000ff">extern</span>  <span style="color:#0000ff">unsigned</span> <span style="color:#0000ff">int</span>    getUpper(<span style="color:#0000ff">unsigned</span> <span style="color:#0000ff">int</span>);</div>
<svg style="left:3.2px;top:318px" width="13" height="13" viewBox="0 0 13 13"><path transform="translate(3,-3)" d="M6.5 0.3 C10.2 0.3 13 2.6 13 5.6 C13 7.3 12.4 8.6 11.6 9.6 L10.6 13 L8.3 10.8 C7.7 10.9 7.1 11 6.5 11 C2.8 11 0 8.6 0 5.6 C0 2.6 2.8 0.3 6.5 0.3 Z" fill="#7c7c7c"/><defs><radialGradient id="g15" cx="0.4" cy="0.3" r="0.8"><stop offset="0" stop-color="#fbd02c"/><stop offset="1" stop-color="#eeb10c"/></radialGradient></defs><path d="M6.5 0.3 C10.2 0.3 13 2.6 13 5.6 C13 7.3 12.4 8.6 11.6 9.6 L10.6 13 L8.3 10.8 C7.7 10.9 7.1 11 6.5 11 C2.8 11 0 8.6 0 5.6 C0 2.6 2.8 0.3 6.5 0.3 Z" fill="url(#g15)"/><rect x="5.9" y="3" width="2.2" height="4" fill="#111"/><rect x="5.9" y="8.2" width="2.2" height="1.9" fill="#111"/></svg>
<div class="t cl g" style="left:19px;top:335px;width:27px;text-align:right">16</div>
<div class="t cl" style="left:52.0px;top:335px"><span style="color:#0000ff">extern</span>  <span style="color:#0000ff">long</span>            getLower(<span style="color:#0000ff">int</span>);</div>
<svg style="left:3.2px;top:340px" width="13" height="13" viewBox="0 0 13 13"><path transform="translate(3,-3)" d="M6.5 0.3 C10.2 0.3 13 2.6 13 5.6 C13 7.3 12.4 8.6 11.6 9.6 L10.6 13 L8.3 10.8 C7.7 10.9 7.1 11 6.5 11 C2.8 11 0 8.6 0 5.6 C0 2.6 2.8 0.3 6.5 0.3 Z" fill="#7c7c7c"/><defs><radialGradient id="g16" cx="0.4" cy="0.3" r="0.8"><stop offset="0" stop-color="#fbd02c"/><stop offset="1" stop-color="#eeb10c"/></radialGradient></defs><path d="M6.5 0.3 C10.2 0.3 13 2.6 13 5.6 C13 7.3 12.4 8.6 11.6 9.6 L10.6 13 L8.3 10.8 C7.7 10.9 7.1 11 6.5 11 C2.8 11 0 8.6 0 5.6 C0 2.6 2.8 0.3 6.5 0.3 Z" fill="url(#g16)"/><rect x="5.9" y="3" width="2.2" height="4" fill="#111"/><rect x="5.9" y="8.2" width="2.2" height="1.9" fill="#111"/></svg>
<div class="t cl g" style="left:19px;top:357px;width:27px;text-align:right">17</div>
<div class="t cl g" style="left:19px;top:379px;width:27px;text-align:right">18</div>
<div class="t cl" style="left:52.0px;top:379px"><span style="color:#0000ff">extern</span> <span style="color:#0000ff">unsigned</span> <span style="color:#0000ff">long</span> err;</div>
<svg style="left:4px;top:383px" width="13" height="13" viewBox="0 0 13 13"><defs><radialGradient id="g17" cx="0.4" cy="0.3" r="0.8"><stop offset="0" stop-color="#fbd02c"/><stop offset="1" stop-color="#eeb10c"/></radialGradient></defs><path d="M6.5 0.3 C10.2 0.3 13 2.6 13 5.6 C13 7.3 12.4 8.6 11.6 9.6 L10.6 13 L8.3 10.8 C7.7 10.9 7.1 11 6.5 11 C2.8 11 0 8.6 0 5.6 C0 2.6 2.8 0.3 6.5 0.3 Z" fill="url(#g17)"/><rect x="5.9" y="3" width="2.2" height="4" fill="#111"/><rect x="5.9" y="8.2" width="2.2" height="1.9" fill="#111"/></svg>
<div class="t cl g" style="left:19px;top:401px;width:27px;text-align:right">19</div>
<div class="t cl g" style="left:19px;top:423px;width:27px;text-align:right">20</div>
<div class="t cl" style="left:52.0px;top:423px"><span style="color:#0000ff">static</span>  <span style="color:#0000ff">void</span> DBstartup(<span style="color:#0000ff">void</span>) {</div>
<div class="t cl g" style="left:19px;top:445px;width:27px;text-align:right">21</div>
<div class="t cl" style="left:52.0px;top:445px">    err     = openDb();</div>
<div class="r" style="left:531.8px;top:4px;width:1.5px;height:22px;background:#1a1a6e;"></div>
</div>
<div class="r" style="left:649px;top:512px;width:954px;height:1px;background:#1a73d2;"></div>
<div class="r" style="left:649px;top:511px;width:1px;height:1px;background:#1a73d2;"></div>
<div class="r" style="left:647px;top:513px;width:956px;height:5px;background:#f8f8f8;"></div>
<div class="r" style="left:647px;top:60px;width:1px;height:453px;background:#f2f2f2;"></div>
<div class="r" style="left:648px;top:60px;width:1px;height:453px;background:#fdfdfd;"></div>
<div class="r" style="left:1024px;top:58px;width:412px;height:35.8px;box-sizing:border-box;border:2.6px solid #ff0a0a;border-radius:1.5px"></div>
<div class="r" style="left:662px;top:95px;width:681px;height:51.5px;box-sizing:border-box;background:#f9f9f9;border:1px solid #e2e2e2;border-radius:4px"></div>
<svg style="left:675.3px;top:115px" width="13" height="13" viewBox="0 0 13 13"><defs><radialGradient id="g18" cx="0.4" cy="0.3" r="0.8"><stop offset="0" stop-color="#fbd02c"/><stop offset="1" stop-color="#eeb10c"/></radialGradient></defs><path d="M6.5 0.3 C10.2 0.3 13 2.6 13 5.6 C13 7.3 12.4 8.6 11.6 9.6 L10.6 13 L8.3 10.8 C7.7 10.9 7.1 11 6.5 11 C2.8 11 0 8.6 0 5.6 C0 2.6 2.8 0.3 6.5 0.3 Z" fill="url(#g18)"/><rect x="5.9" y="3" width="2.2" height="4" fill="#111"/><rect x="5.9" y="8.2" width="2.2" height="1.9" fill="#111"/></svg>
<span class="t" style="left:690.70px;top:115px;font:normal normal 11.5px/14px 'Liberation Mono',monospace;color:#000;letter-spacing:-0.901px;transform:scaleY(1.08);transform-origin:0 10px;">[qac-11.4.0-4600] The macro 'NULL' is also defined in '&lt;stddef.h&gt;'. - [M3CM Rule-21.1] M3CM</span>
<a class="t" style="left:1271.00px;top:115px;font:normal normal 11.5px/14px 'Liberation Mono',monospace;color:#0000ee;letter-spacing:-0.901px;transform:scaleY(1.08);transform-origin:0 10px;text-decoration:underline">Help</a>
<div class="r" style="left:0px;top:522px;width:1603px;height:1px;background:#f0f0f0;"></div>
<div class="r" style="left:0px;top:523px;width:1603px;height:23px;background:#d9d9d9;border-top:1px solid #c4c4c4;border-bottom:1px solid #b4b4b4;box-sizing:border-box"></div>
<span class="t" style="left:-2.00px;top:526px;font:normal normal 15px/19px 'Liberation Sans',sans-serif;color:#000;letter-spacing:0.380px;">Analysis Results/Diagnostics</span>
<div class="r" style="left:0px;top:546px;width:1603px;height:56px;background:#f0f0f0;"></div>
<div class="r" style="left:0px;top:602px;width:1603px;height:1px;background:#828790;"></div>
<div class="r" style="left:-4.7px;top:557px;width:36.5px;height:35px;box-sizing:border-box;background:#cce8ff;border:1px solid #99d1ff;border-radius:2.5px"></div>
<svg style="left:7.1px;top:570px" width="13" height="13" viewBox="0 0 13 13"><defs><radialGradient id="g19" cx="0.4" cy="0.3" r="0.8"><stop offset="0" stop-color="#f4624a"/><stop offset="1" stop-color="#e23c28"/></radialGradient></defs><path d="M6.5 0.3 C10.2 0.3 13 2.6 13 5.6 C13 7.3 12.4 8.6 11.6 9.6 L10.6 13 L8.3 10.8 C7.7 10.9 7.1 11 6.5 11 C2.8 11 0 8.6 0 5.6 C0 2.6 2.8 0.3 6.5 0.3 Z" fill="url(#g19)"/><rect x="5.9" y="3" width="2.2" height="4" fill="#111"/><rect x="5.9" y="8.2" width="2.2" height="1.9" fill="#111"/></svg>
<div class="r" style="left:32.3px;top:557px;width:36.5px;height:35px;box-sizing:border-box;background:#cce8ff;border:1px solid #99d1ff;border-radius:2.5px"></div>
<svg style="left:44.0px;top:570px" width="13" height="13" viewBox="0 0 13 13"><defs><radialGradient id="g20" cx="0.4" cy="0.3" r="0.8"><stop offset="0" stop-color="#fbd02c"/><stop offset="1" stop-color="#eeb10c"/></radialGradient></defs><path d="M6.5 0.3 C10.2 0.3 13 2.6 13 5.6 C13 7.3 12.4 8.6 11.6 9.6 L10.6 13 L8.3 10.8 C7.7 10.9 7.1 11 6.5 11 C2.8 11 0 8.6 0 5.6 C0 2.6 2.8 0.3 6.5 0.3 Z" fill="url(#g20)"/><rect x="5.9" y="3" width="2.2" height="4" fill="#111"/><rect x="5.9" y="8.2" width="2.2" height="1.9" fill="#111"/></svg>
<div class="r" style="left:69.3px;top:557px;width:36.5px;height:35px;box-sizing:border-box;background:#cce8ff;border:1px solid #99d1ff;border-radius:2.5px"></div>
<svg style="left:80.89999999999999px;top:570px" width="13" height="13" viewBox="0 0 13 13"><defs><radialGradient id="g21" cx="0.4" cy="0.3" r="0.8"><stop offset="0" stop-color="#7cc02c"/><stop offset="1" stop-color="#4e9c10"/></radialGradient></defs><path d="M6.5 0.3 C10.2 0.3 13 2.6 13 5.6 C13 7.3 12.4 8.6 11.6 9.6 L10.6 13 L8.3 10.8 C7.7 10.9 7.1 11 6.5 11 C2.8 11 0 8.6 0 5.6 C0 2.6 2.8 0.3 6.5 0.3 Z" fill="url(#g21)"/><rect x="5.9" y="3" width="2.2" height="4" fill="#111"/><rect x="5.9" y="8.2" width="2.2" height="1.9" fill="#111"/></svg>
<div class="r" style="left:106.3px;top:557px;width:36.5px;height:35px;box-sizing:border-box;background:#cce8ff;border:1px solid #99d1ff;border-radius:2.5px"></div>
<svg style="left:117.79999999999998px;top:570px" width="13" height="13" viewBox="0 0 13 13"><defs><radialGradient id="g22" cx="0.4" cy="0.3" r="0.8"><stop offset="0" stop-color="#2f9ec6"/><stop offset="1" stop-color="#1579a4"/></radialGradient></defs><path d="M6.5 0.3 C10.2 0.3 13 2.6 13 5.6 C13 7.3 12.4 8.6 11.6 9.6 L10.6 13 L8.3 10.8 C7.7 10.9 7.1 11 6.5 11 C2.8 11 0 8.6 0 5.6 C0 2.6 2.8 0.3 6.5 0.3 Z" fill="url(#g22)"/><rect x="5.9" y="3" width="2.2" height="4" fill="#111"/><rect x="5.9" y="8.2" width="2.2" height="1.9" fill="#111"/></svg>
<div class="r" style="left:146px;top:554px;width:1px;height:43px;background:#d0d0d0;"></div>
<svg style="left:161px;top:569px" width="13" height="13" viewBox="0 0 13 13"><defs><radialGradient id="g23" cx="0.4" cy="0.3" r="0.8"><stop offset="0" stop-color="#dcdcdc"/><stop offset="1" stop-color="#a6a6a6"/></radialGradient></defs><path d="M6.5 0.3 C10.2 0.3 13 2.6 13 5.6 C13 7.3 12.4 8.6 11.6 9.6 L10.6 13 L8.3 10.8 C7.7 10.9 7.1 11 6.5 11 C2.8 11 0 8.6 0 5.6 C0 2.6 2.8 0.3 6.5 0.3 Z" fill="url(#g23)"/><text x="6.5" y="8.6" text-anchor="middle" font-family="Liberation Sans, sans-serif" font-size="7.5" font-weight="bold" fill="#555">2</text></svg>
<svg style="left:202px;top:571.5px" width="8" height="7" viewBox="0 0 8 7"><path d="M0 0 L4 3.5 L0 7 Z M4 0 L8 3.5 L4 7 Z" fill="#777"/></svg>
<div class="r" style="left:227px;top:554px;width:1px;height:43px;background:#d0d0d0;"></div>
<svg style="left:243.5px;top:569.8px" width="21" height="20" viewBox="0 0 21 20"><rect x="0" y="0.0" width="12" height="1" fill="#555"/><rect x="0" y="3.2" width="12" height="1" fill="#555"/><rect x="0" y="6.4" width="12" height="1" fill="#555"/><rect x="0" y="9.6" width="12" height="1" fill="#555"/><path d="M13 15 L20.5 15 L16.75 19 Z" fill="#111"/></svg>
<div class="r" style="left:271px;top:554px;width:1px;height:43px;background:#d0d0d0;"></div>
<span class="t" style="left:285.00px;top:570px;font:normal normal 11.5px/14px 'Liberation Mono',monospace;color:#000;letter-spacing:-0.901px;transform:scaleY(1.08);transform-origin:0 10px;">Severity Filter:</span>
<span class="t" style="left:400.00px;top:569px;font:normal normal 11.5px/14px 'Liberation Sans',sans-serif;color:#000;">0</span>
<span class="t" style="left:594.20px;top:569px;font:normal normal 11.5px/14px 'Liberation Sans',sans-serif;color:#000;">9</span>
<div class="r" style="left:426px;top:570px;width:150px;height:4px;box-sizing:border-box;background:#e7eaea;border:1px solid #d6d6d6"></div>
<div class="r" style="left:432px;top:583px;width:1px;height:5px;background:#b8b8b8;"></div>
<div class="r" style="left:447px;top:583px;width:1px;height:5px;background:#b8b8b8;"></div>
<div class="r" style="left:462px;top:583px;width:1px;height:5px;background:#b8b8b8;"></div>
<div class="r" style="left:478px;top:583px;width:1px;height:5px;background:#b8b8b8;"></div>
<div class="r" style="left:493px;top:583px;width:1px;height:5px;background:#b8b8b8;"></div>
<div class="r" style="left:508px;top:583px;width:1px;height:5px;background:#b8b8b8;"></div>
<div class="r" style="left:524px;top:583px;width:1px;height:5px;background:#b8b8b8;"></div>
<div class="r" style="left:539px;top:583px;width:1px;height:5px;background:#b8b8b8;"></div>
<div class="r" style="left:554px;top:583px;width:1px;height:5px;background:#b8b8b8;"></div>
<div class="r" style="left:569px;top:583px;width:1px;height:5px;background:#b8b8b8;"></div>
<svg style="left:456.7px;top:562px" width="11" height="19" viewBox="0 0 11 19"><path d="M0 0 L11 0 L11 14 L5.5 19 L0 14 Z" fill="#0078d7"/></svg>
<svg style="left:1309.7px;top:570px" width="13" height="10" viewBox="0 0 13 10"><rect x="0" y="0" width="2" height="10" fill="#808080"/><path d="M13 0 L13 10 L2.5 5 Z" fill="#808080"/></svg>
<svg style="left:1346.8px;top:570px" width="12" height="10" viewBox="0 0 12 10"><path d="M12 0 L12 10 L0 5.0 Z" fill="#8a8a8a"/></svg>
<svg style="left:1386px;top:570px" width="12" height="10" viewBox="0 0 12 10"><path d="M0 0 L0 10 L12 5.0 Z" fill="#808080"/></svg>
<svg style="left:1422px;top:570px" width="13" height="10" viewBox="0 0 13 10"><rect x="11" y="0" width="2" height="10" fill="#808080"/><path d="M0 0 L0 10 L10.5 5 Z" fill="#808080"/></svg>
<span class="t" style="left:1446.50px;top:569px;font:normal bold 12.5px/16px 'Liberation Mono',monospace;color:#000;letter-spacing:0.499px;transform:scaleY(1.1);transform-origin:0 11px;">Page</span>
<div class="r" style="left:1487.5px;top:563.6px;width:58.8px;height:23px;box-sizing:border-box;background:#fff;border:1px solid #e8e8e8;border-bottom:1px solid #8a8a8a;border-radius:2px"></div>
<span class="t" style="left:1490.50px;top:569px;font:normal normal 11.5px/14px 'Liberation Mono',monospace;color:#000;letter-spacing:-0.901px;transform:scaleY(1.08);transform-origin:0 10px;">1</span>
<span class="t" style="left:1555.00px;top:569px;font:normal bold 12.5px/16px 'Liberation Mono',monospace;color:#000;letter-spacing:0.499px;transform:scaleY(1.1);transform-origin:0 11px;">/ 1 pages</span>
<div class="r" style="left:0px;top:603px;width:1603px;height:87px;background:#fff;"></div>
<div class="r" style="left:40px;top:603px;width:1px;height:23px;background:#e5e5e5;"></div>
<div class="r" style="left:358px;top:603px;width:1px;height:23px;background:#e5e5e5;"></div>
<div class="r" style="left:418px;top:603px;width:1px;height:23px;background:#e5e5e5;"></div>
<div class="r" style="left:568px;top:603px;width:1px;height:23px;background:#e5e5e5;"></div>
<div class="r" style="left:1338px;top:603px;width:1px;height:23px;background:#e5e5e5;"></div>
<div class="r" style="left:1578px;top:603px;width:1px;height:23px;background:#e5e5e5;"></div>
<svg style="left:196px;top:604px" width="9" height="5" viewBox="0 0 9 5"><path d="M0.3 0.2 L4.5 4.4 L8.7 0.2" stroke="#4a4a4a" stroke-width="1" fill="none"/></svg>
<span class="t" style="left:46.40px;top:606px;font:normal normal 15px/19px 'Liberation Sans',sans-serif;color:#000;letter-spacing:0.500px;">ID</span>
<div class="c" style="left:359px;top:603px;width:56px;height:23px"><span class="t" style="left:5.00px;top:3px;font:normal normal 15px/19px 'Liberation Sans',sans-serif;color:#000;letter-spacing:0.973px;">Severity</span></div>
<span class="t" style="left:424.50px;top:606px;font:normal normal 15px/19px 'Liberation Sans',sans-serif;color:#000;letter-spacing:0.500px;">Rule</span>
<span class="t" style="left:574.50px;top:606px;font:normal normal 15px/19px 'Liberation Sans',sans-serif;color:#000;letter-spacing:0.487px;">Message</span>
<span class="t" style="left:1344.30px;top:606px;font:normal normal 15px/19px 'Liberation Sans',sans-serif;color:#000;letter-spacing:0.500px;">File</span>
<span class="t" style="left:1584.00px;top:606px;font:normal normal 15px/19px 'Liberation Sans',sans-serif;color:#000;letter-spacing:0.500px;">Line</span>
<div class="r" style="left:19px;top:648px;width:1584px;height:22px;background:#d9d9d9;border-radius:2px 0 0 2px"></div>
<svg style="left:22.8px;top:631px" width="13" height="13" viewBox="0 0 13 13"><defs><radialGradient id="g24" cx="0.4" cy="0.3" r="0.8"><stop offset="0" stop-color="#fbd02c"/><stop offset="1" stop-color="#eeb10c"/></radialGradient></defs><path d="M6.5 0.3 C10.2 0.3 13 2.6 13 5.6 C13 7.3 12.4 8.6 11.6 9.6 L10.6 13 L8.3 10.8 C7.7 10.9 7.1 11 6.5 11 C2.8 11 0 8.6 0 5.6 C0 2.6 2.8 0.3 6.5 0.3 Z" fill="url(#g24)"/><rect x="5.9" y="3" width="2.2" height="4" fill="#111"/><rect x="5.9" y="8.2" width="2.2" height="1.9" fill="#111"/></svg>
<a class="t" style="left:44.20px;top:628px;font:normal normal 15px/19px 'Liberation Sans',sans-serif;color:#0000ff;letter-spacing:0.683px;text-decoration:underline">qac-11.4.0-4604</a>
<span class="t" style="left:362.40px;top:628px;font:normal normal 15px/19px 'Liberation Sans',sans-serif;color:#000;letter-spacing:0.500px;">2</span>
<a class="t" style="left:422.70px;top:628px;font:normal normal 15px/19px 'Liberation Sans',sans-serif;color:#0000ff;letter-spacing:0.594px;text-decoration:underline">M3CM Rule-21.2</a>
<span class="t" style="left:572.30px;top:628px;font:normal normal 15px/19px 'Liberation Sans',sans-serif;color:#000;letter-spacing:0.639px;">The object/function 'malloc' is being declared with the same name as an ordinary identifier defined in '...</span>
<span class="t" style="left:1342.50px;top:628px;font:normal normal 15px/19px 'Liberation Sans',sans-serif;color:#000;letter-spacing:0.637px;">inspect.c</span>
<span class="t" style="left:1582.60px;top:628px;font:normal normal 15px/19px 'Liberation Sans',sans-serif;color:#000;letter-spacing:0.500px;">8</span>
<svg style="left:22.8px;top:653px" width="13" height="13" viewBox="0 0 13 13"><defs><radialGradient id="g25" cx="0.4" cy="0.3" r="0.8"><stop offset="0" stop-color="#b9b56a"/><stop offset="1" stop-color="#a29e5c"/></radialGradient></defs><path d="M6.5 0.3 C10.2 0.3 13 2.6 13 5.6 C13 7.3 12.4 8.6 11.6 9.6 L10.6 13 L8.3 10.8 C7.7 10.9 7.1 11 6.5 11 C2.8 11 0 8.6 0 5.6 C0 2.6 2.8 0.3 6.5 0.3 Z" fill="url(#g25)"/><rect x="5.9" y="3" width="2.2" height="4" fill="#111"/><rect x="5.9" y="8.2" width="2.2" height="1.9" fill="#111"/></svg>
<a class="t" style="left:44.20px;top:650px;font:normal normal 15px/19px 'Liberation Sans',sans-serif;color:#0000ff;letter-spacing:0.683px;text-decoration:underline">qac-11.4.0-4600</a>
<span class="t" style="left:362.40px;top:650px;font:normal normal 15px/19px 'Liberation Sans',sans-serif;color:#000;letter-spacing:0.500px;">2</span>
<a class="t" style="left:422.70px;top:650px;font:normal normal 15px/19px 'Liberation Sans',sans-serif;color:#0000ff;letter-spacing:0.594px;text-decoration:underline">M3CM Rule-21.1</a>
<span class="t" style="left:572.30px;top:650px;font:normal normal 15px/19px 'Liberation Sans',sans-serif;color:#000;letter-spacing:0.588px;">The macro 'NULL' is also defined in '&lt;stddef.h&gt;'.</span>
<span class="t" style="left:1342.50px;top:650px;font:normal normal 15px/19px 'Liberation Sans',sans-serif;color:#000;letter-spacing:0.637px;">inspect.c</span>
<span class="t" style="left:1582.60px;top:650px;font:normal normal 15px/19px 'Liberation Sans',sans-serif;color:#000;letter-spacing:0.500px;">1</span>
<svg style="left:22.8px;top:675px" width="13" height="13" viewBox="0 0 13 13"><defs><radialGradient id="g26" cx="0.4" cy="0.3" r="0.8"><stop offset="0" stop-color="#fbd02c"/><stop offset="1" stop-color="#eeb10c"/></radialGradient></defs><path d="M6.5 0.3 C10.2 0.3 13 2.6 13 5.6 C13 7.3 12.4 8.6 11.6 9.6 L10.6 13 L8.3 10.8 C7.7 10.9 7.1 11 6.5 11 C2.8 11 0 8.6 0 5.6 C0 2.6 2.8 0.3 6.5 0.3 Z" fill="url(#g26)"/><rect x="5.9" y="3" width="2.2" height="4" fill="#111"/><rect x="5.9" y="8.2" width="2.2" height="1.9" fill="#111"/></svg>
<a class="t" style="left:44.20px;top:672px;font:normal normal 15px/19px 'Liberation Sans',sans-serif;color:#0000ff;letter-spacing:0.683px;text-decoration:underline">qac-11.4.0-4558</a>
<span class="t" style="left:362.40px;top:672px;font:normal normal 15px/19px 'Liberation Sans',sans-serif;color:#000;letter-spacing:0.500px;">2</span>
<a class="t" style="left:422.70px;top:672px;font:normal normal 15px/19px 'Liberation Sans',sans-serif;color:#0000ff;letter-spacing:0.594px;text-decoration:underline">M3CM Rule-10.1</a>
<span class="t" style="left:572.30px;top:672px;font:normal normal 15px/19px 'Liberation Sans',sans-serif;color:#000;letter-spacing:0.572px;">An expression of 'essentially unsigned' type (unsigned long) is being used as the  operand of this logica...</span>
<span class="t" style="left:1342.50px;top:672px;font:normal normal 15px/19px 'Liberation Sans',sans-serif;color:#000;letter-spacing:0.637px;">inspect.c</span>
<span class="t" style="left:1582.60px;top:672px;font:normal normal 15px/19px 'Liberation Sans',sans-serif;color:#000;letter-spacing:0.500px;">22</span>
</div>
</body></html>
